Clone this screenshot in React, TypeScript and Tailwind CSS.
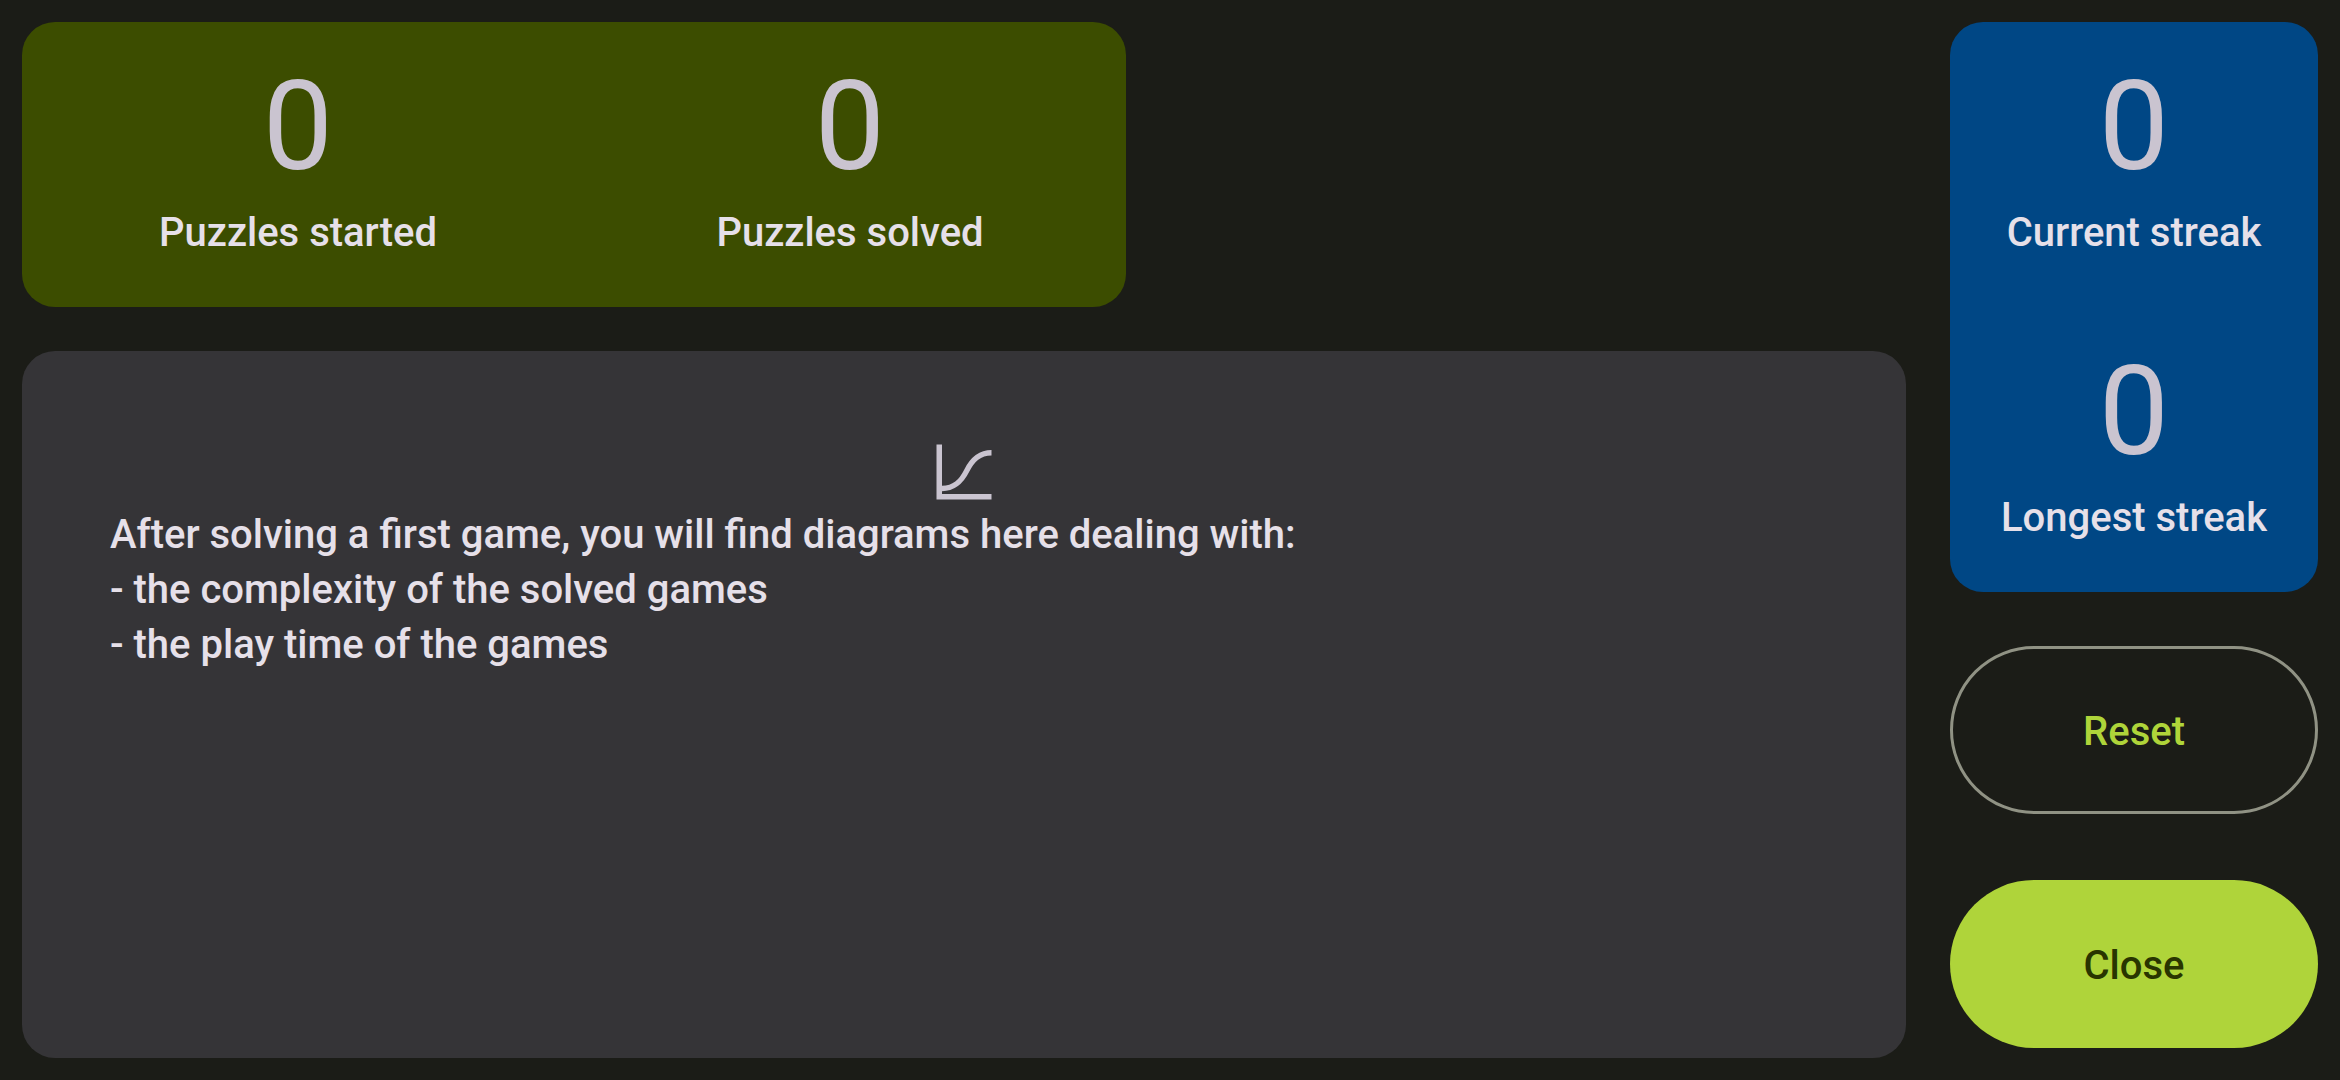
import React from "react";

function Stat({ value, label }: { value: number; label: string }) {
  return (
    <div className="flex flex-1 flex-col items-center pt-[19px] pb-[54px]">
      <div className="text-[125px] leading-[172px] text-[#cac4d0]">{value}</div>
      <div className="text-[40px] font-medium leading-[40px]">{label}</div>
    </div>
  );
}

export default function App() {
  return (
    <main className="flex min-h-screen gap-[44px] bg-[#1b1c17] p-[22px] font-['Roboto',sans-serif] text-[#e6e0e9]">
      <div className="flex flex-1 flex-col gap-[44px]">
        <section className="flex w-[1104px] max-w-full rounded-[33px] bg-[#3c4d00]">
          <Stat value={0} label="Puzzles started" />
          <Stat value={0} label="Puzzles solved" />
        </section>
        <section className="flex flex-1 flex-col rounded-[33px] bg-[#353437] px-[88px] pt-[88px]">
          <svg
            viewBox="0 0 24 24"
            className="h-[66px] w-[66px] self-center"
            fill="none"
            stroke="#cac4d0"
            strokeWidth="2"
            aria-hidden="true"
          >
            <path d="M3 2V21H22" />
            <path d="M4 18C8.5 18 11 15.5 13 11.5S17.5 5 22 5" />
          </svg>
          <p className="mt-[2px] whitespace-pre-line text-[40px] font-medium leading-[55px]">
            {"After solving a first game, you will find diagrams here dealing with:\n- the complexity of the solved games\n- the play time of the games"}
          </p>
        </section>
      </div>
      <aside className="flex w-[368px] flex-col">
        <section className="flex flex-col rounded-[33px] bg-[#004785]">
          <Stat value={0} label="Current streak" />
          <Stat value={0} label="Longest streak" />
        </section>
        <button className="mt-[54px] h-[168px] rounded-full border-[3px] border-[#909284] pt-1 text-[40px] font-medium text-[#afd43a]">
          Reset
        </button>
        <button className="mt-[66px] h-[168px] rounded-full bg-[#afd43a] pt-1 text-[40px] font-medium text-[#293500]">
          Close
        </button>
      </aside>
    </main>
  );
}
